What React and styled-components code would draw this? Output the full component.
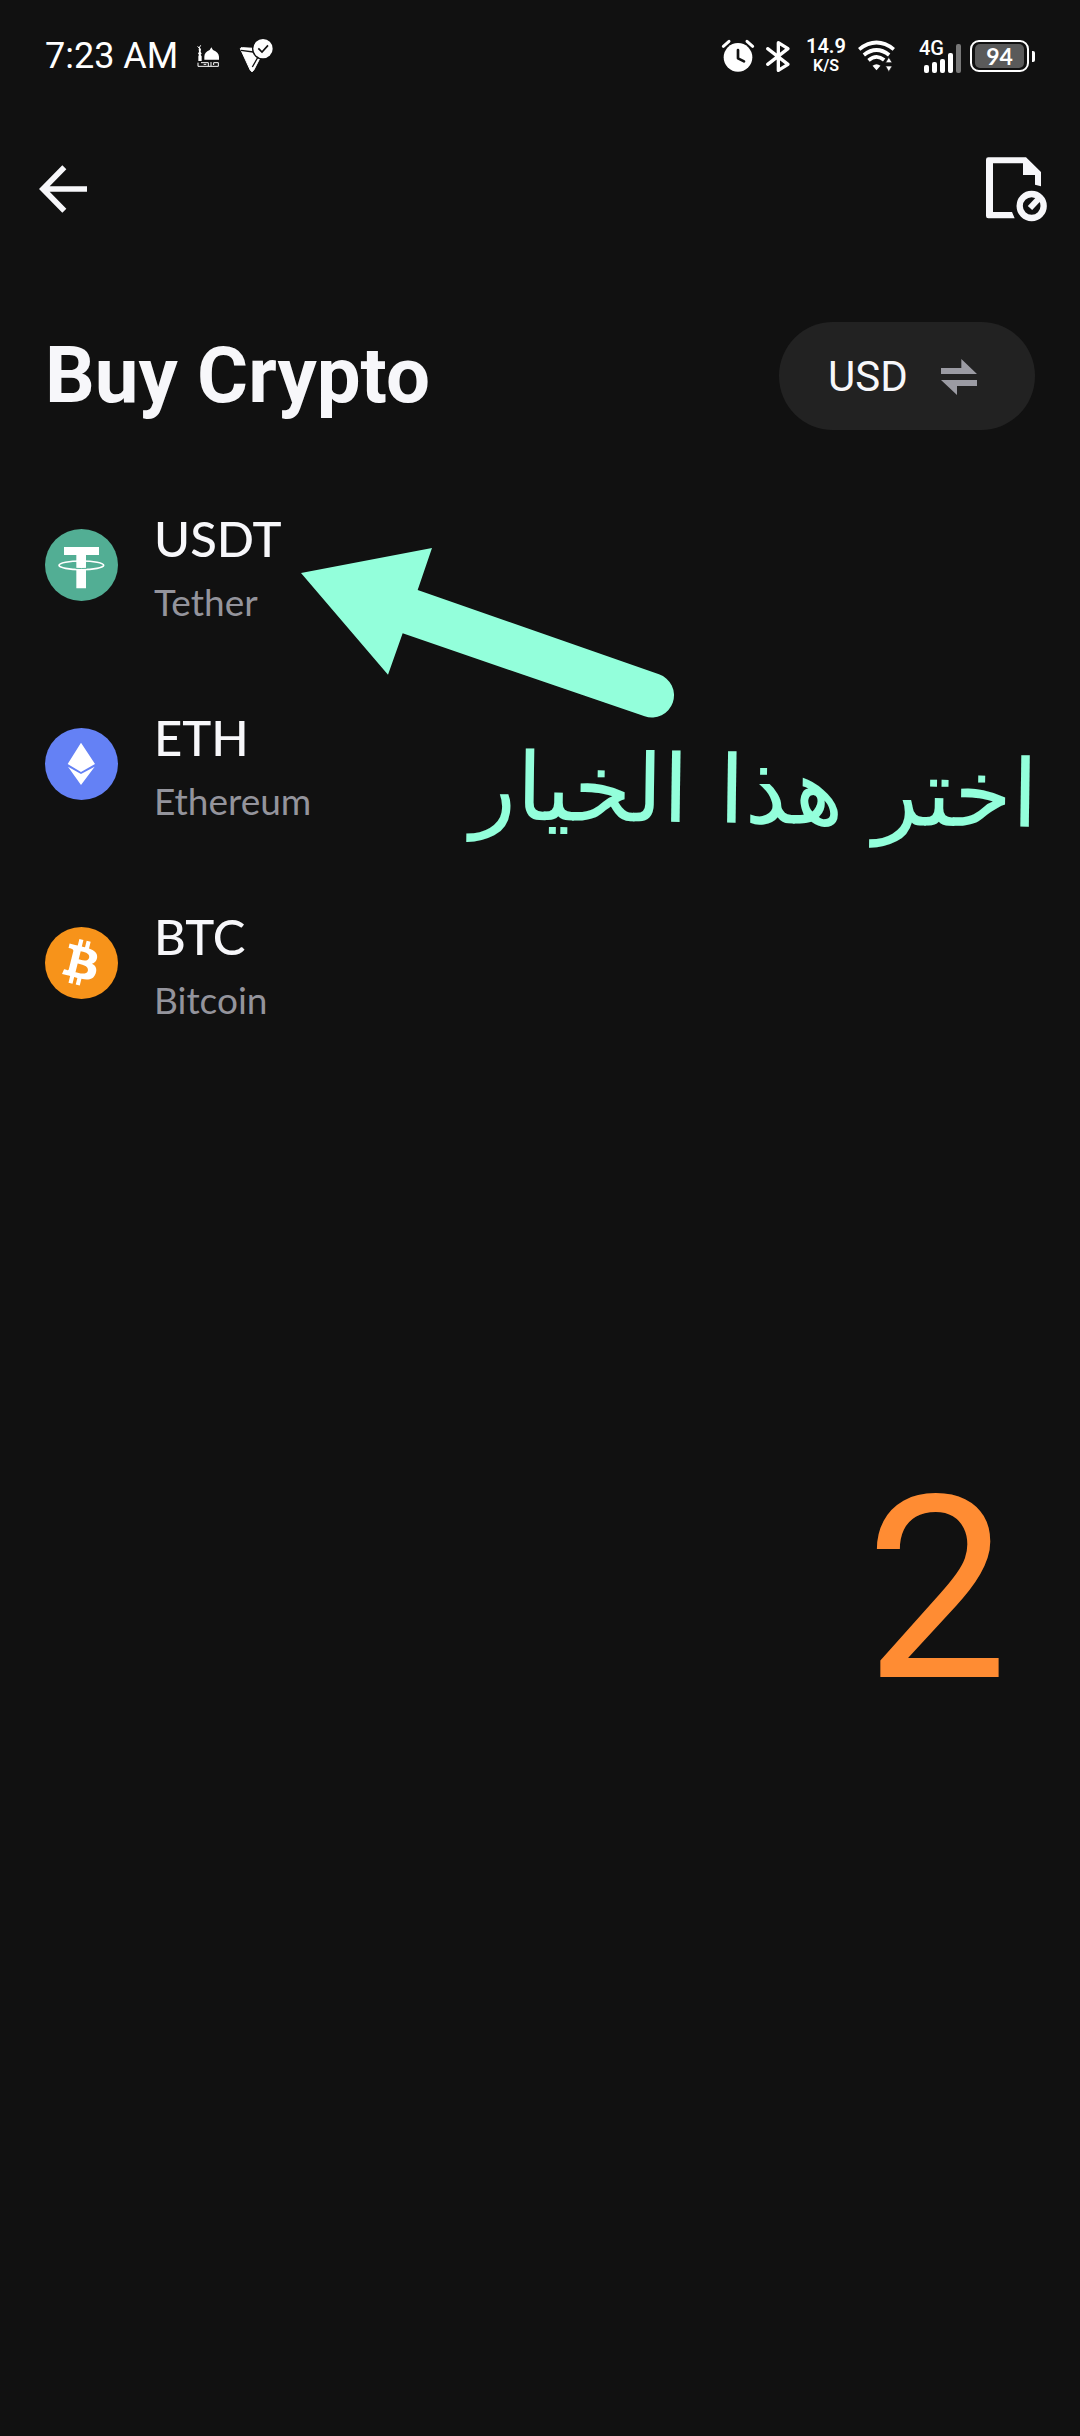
import React from "react";
import styled, { createGlobalStyle } from "styled-components";

const GlobalStyle = createGlobalStyle`
  * { box-sizing: border-box; }
  body { margin: 0; background: #111111; color: #f7f7fa; font-family: Roboto, "Liberation Sans", sans-serif; }
  svg { display: block; flex: none; overflow: visible; }
`;

const Screen = styled.main`
  position: relative;
  min-height: 100vh;
  overflow: hidden;
`;

const StatusBar = styled.div`
  display: flex;
  align-items: center;
  justify-content: space-between;
  height: 112px;
  padding: 0 45px;
  color: #ffffff;
`;

const StatusGroup = styled.div`
  display: flex;
  align-items: center;
  gap: ${(p) => p.$gap}px;
`;

const NetworkGroup = styled(StatusGroup)`
  padding-left: 12px;
`;

const Clock = styled.time`
  font-size: 36px;
  line-height: 44px;
`;

const Speed = styled.div`
  display: flex;
  flex-direction: column;
  align-items: center;
  width: 44px;
  padding-left: 4px;
  font-weight: 600;
`;

const SpeedLine = styled.span`
  font-size: ${(p) => p.$size}px;
  line-height: 19px;
`;

const Signal = styled.div`
  display: grid;
  width: 42px;
  height: 34px;
  > * { grid-area: 1 / 1; }
`;

const Network = styled.span`
  font-size: 20px;
  line-height: 18px;
  font-weight: 500;
`;

const Bars = styled.svg`
  align-self: end;
  justify-self: end;
`;

const Battery = styled.div`
  display: flex;
  align-items: center;
  gap: 3px;
`;

const Cell = styled.div`
  width: 59px;
  height: 32px;
  padding: 2px 3px;
  border: 2px solid #ffffff;
  border-radius: 9px;
`;

const Charge = styled.div`
  height: 24px;
  border-radius: 5px;
  background: #5a5a5a;
  text-align: center;
  font: 700 23px/24px Lato, sans-serif;
`;

const Nub = styled.div`
  width: 3px;
  height: 11px;
  border-radius: 0 2px 2px 0;
  background: #ffffff;
`;

const Toolbar = styled.header`
  display: flex;
  align-items: center;
  justify-content: space-between;
  height: 154px;
  padding: 0 33px 0 39px;
`;

const IconButton = styled.button`
  padding: 0;
  border: 0;
  background: none;
  color: #f7f7fa;
`;

const TitleRow = styled.section`
  display: flex;
  align-items: center;
  justify-content: space-between;
  padding: 56px 45px 35px;
`;

const Title = styled.h1`
  margin: 0;
  font-size: 78px;
  line-height: 92px;
  font-weight: 700;
`;

const Currency = styled.button`
  display: flex;
  align-items: center;
  justify-content: space-between;
  width: 256px;
  height: 108px;
  padding: 2px 58px 0 49px;
  border: 0;
  border-radius: 54px;
  background: #222222;
  color: #f7f7fa;
  font: 400 42px/50px Roboto, sans-serif;
`;

const CoinArea = styled.section`
  position: relative;
`;

const CoinList = styled.ul`
  margin: 0;
  padding: 0;
  list-style: none;
`;

const Coin = styled.button`
  display: flex;
  align-items: center;
  gap: 36px;
  width: 100%;
  height: 199px;
  padding: 0 45px;
  border: 0;
  background: none;
  color: #f7f7fa;
  text-align: left;
  font-family: Lato, "Open Sans", sans-serif;
`;

const CoinText = styled.span`
  display: flex;
  flex-direction: column;
  gap: 4px;
  padding-top: 6px;
`;

const Symbol = styled.span`
  font-size: 49px;
  line-height: 64px;
  font-weight: 500;
`;

const Name = styled.span`
  color: #94949c;
  font-size: 37px;
  line-height: 56px;
`;

const Arrow = styled.svg`
  position: absolute;
  left: 300px;
  top: 83px;
  pointer-events: none;
`;

const Hint = styled.p`
  position: absolute;
  right: 42px;
  top: 256px;
  margin: 0;
  color: #93ffdb;
  font: 400 94px/140px "DejaVu Sans", sans-serif;
  white-space: nowrap;
  transform: rotate(0.8deg);
  pointer-events: none;
`;

const Step = styled.p`
  position: absolute;
  right: 72px;
  top: 1440px;
  margin: 0;
  color: #ff8c33;
  font-size: 254px;
  line-height: 300px;
`;

const MosqueIcon = () => (
  <svg width="23" height="22" viewBox="0 0 69 66" fill="#fff" aria-hidden="true">
    <path d="M22 44V35q0-14 16-20l5-8 5 8q17 6 18 20v9zM4 48V34l2-5-3-3 3-6-1-8 3-5 4 6-1 7 3 6-3 3 3 5v14z" />
    <path d="M2 4l4 5 5-8M3 53v11h61V53H50v7M12 53h22v11M20 58h8M42 51v12" fill="none" stroke="#fff" strokeWidth="3" />
  </svg>
);

const ConeIcon = () => (
  <svg width="34" height="34" viewBox="0 0 102 102" aria-hidden="true">
    <path d="M4 29q1-4 7-3l34 2q2 22 19 27l-20 39q-5 8-10 0z" fill="#fff" stroke="#fff" strokeWidth="3" strokeLinejoin="round" />
    <path d="M6 34l37 5M40 84l17-30" stroke="#111" strokeWidth="4" fill="none" />
    <circle cx="72" cy="29" r="33" fill="#111" />
    <circle cx="72" cy="29" r="29" fill="#fff" />
    <path d="M58 28l11 11 18-20" fill="none" stroke="#111" strokeWidth="5" />
  </svg>
);

const AlarmIcon = () => (
  <svg width="32" height="32" viewBox="0 0 96 96" aria-hidden="true">
    <circle cx="48" cy="52" r="43" fill="#fff" />
    <path d="M4 19L21 4M92 19L75 4" stroke="#fff" strokeWidth="9" strokeLinecap="round" />
    <path d="M48 30v25l18 9" fill="none" stroke="#111" strokeWidth="8" strokeLinecap="round" strokeLinejoin="round" />
  </svg>
);

const BluetoothIcon = () => (
  <svg width="24" height="31" viewBox="0 0 72 93" aria-hidden="true">
    <path d="M5 23l61 47-29 18V5l29 18L5 70" fill="none" stroke="#fff" strokeWidth="10" strokeLinecap="round" strokeLinejoin="round" />
  </svg>
);

const WifiIcon = () => (
  <svg width="37" height="30" viewBox="0 0 110 90" aria-hidden="true">
    <path d="M3 25q52-41 104 0M17 42q38-30 76 0M31 58q24-20 47-1" fill="none" stroke="#fff" strokeWidth="11" />
    <path d="M43 74q12-9 24 0L55 88z" fill="#fff" />
    <path d="M92 49l10 16H82zM92 92l10-17H82z" fill="#fff" stroke="#111" strokeWidth="2" />
  </svg>
);

const BackIcon = () => (
  <svg width="48" height="48" viewBox="0 0 144 144" aria-hidden="true">
    <path d="M12 72h132M76 7L12 72l64 65" fill="none" stroke="#f7f7fa" strokeWidth="17" />
  </svg>
);

const OrdersIcon = () => (
  <svg width="61" height="65" viewBox="0 0 183 195" fill="#f7f7fa" aria-hidden="true">
    <path d="M7 1h113l45 44v43l-18-5V54h-36V19H21v146h57l8 19H7q-7 0-7-7V8q0-7 7-7z" />
    <circle cx="137" cy="147" r="36" fill="none" stroke="#f7f7fa" strokeWidth="19" />
    <path d="M132 153l31-33" stroke="#f7f7fa" strokeWidth="18" />
  </svg>
);

const SwapIcon = () => (
  <svg width="36" height="36" viewBox="0 0 108 108" fill="#9b9ba3" aria-hidden="true">
    <path d="M0 27h61V0l47 45H0zM108 81H48v27L0 63h108z" />
  </svg>
);

const TetherIcon = () => (
  <svg width="73" height="72" viewBox="0 0 219 216" aria-hidden="true">
    <ellipse cx="109.500" cy="108" rx="109.500" ry="108" fill="#52ae94" />
    <path d="M57 54h105v24h-39v100H94V78H57z" fill="#fff" />
    <ellipse cx="109" cy="109" rx="67" ry="13" fill="none" stroke="#fff" strokeWidth="5" />
    <path d="M92 118q17 1 33 0" stroke="#52ae94" strokeWidth="3" fill="none" />
  </svg>
);

const EthereumIcon = () => (
  <svg width="73" height="72" viewBox="0 0 219 216" aria-hidden="true">
    <ellipse cx="109.500" cy="108" rx="109.500" ry="108" fill="#6481f5" />
    <path d="M108 44l42 64-42 24-40-24zM69 116l39 22 41-22-41 55z" fill="#fff" />
  </svg>
);

const BitcoinIcon = () => (
  <svg width="73" height="72" viewBox="0 0 219 216" aria-hidden="true">
    <ellipse cx="109.500" cy="108" rx="109.500" ry="108" fill="#f7931a" />
    <path
      transform="translate(-6 -6) scale(7)"
      fill="#fff"
      d="M23.189 14.02c.314-2.096-1.283-3.223-3.465-3.975l.708-2.84-1.728-.43-.69 2.765c-.454-.114-.92-.22-1.385-.326l.695-2.783L15.596 6l-.708 2.839c-.376-.086-.746-.17-1.104-.26l.002-.009-2.384-.595-.46 1.846s1.283.294 1.256.312c.7.175.826.638.805 1.006l-.806 3.235c.048.012.11.03.18.057l-.183-.045-1.13 4.532c-.086.212-.303.531-.793.41.018.025-1.256-.313-1.256-.313l-.858 1.978 2.25.561c.418.105.828.215 1.231.318l-.715 2.872 1.727.43.708-2.84c.472.127.93.245 1.378.357l-.706 2.828 1.728.43.715-2.866c2.948.558 5.164.333 6.097-2.333.752-2.146-.037-3.385-1.588-4.192 1.13-.26 1.98-1.003 2.207-2.538zm-3.95 5.538c-.533 2.147-4.148.986-5.32.695l.95-3.805c1.172.293 4.929.872 4.37 3.11zm.535-5.569c-.487 1.953-3.495.96-4.47.717l.86-3.45c.975.243 4.118.696 3.61 2.733z"
    />
  </svg>
);

const coins = [
  { symbol: "USDT", name: "Tether", Icon: TetherIcon },
  { symbol: "ETH", name: "Ethereum", Icon: EthereumIcon },
  { symbol: "BTC", name: "Bitcoin", Icon: BitcoinIcon },
];

export default function App() {
  return (
    <Screen>
      <GlobalStyle />
      <StatusBar>
        <StatusGroup $gap={19}>
          <Clock>7:23 AM</Clock>
          <MosqueIcon />
          <ConeIcon />
        </StatusGroup>
        <StatusGroup $gap={12}>
          <AlarmIcon />
          <BluetoothIcon />
          <Speed>
            <SpeedLine $size={20}>14.9</SpeedLine>
            <SpeedLine $size={16}>K/S</SpeedLine>
          </Speed>
          <WifiIcon />
          <NetworkGroup $gap={9}>
            <Signal>
              <Network>4G</Network>
              <Bars width="37" height="29" viewBox="0 0 37 29" fill="#fff">
                <rect x="0" y="21" width="5" height="8" rx="2" />
                <rect x="8" y="18" width="5" height="11" rx="2" />
                <rect x="16" y="15" width="5" height="14" rx="2" />
                <rect x="24" y="9" width="5" height="20" rx="2" />
                <rect x="32" y="0" width="5" height="29" rx="2" fill="#777" />
              </Bars>
            </Signal>
            <Battery>
              <Cell>
                <Charge>94</Charge>
              </Cell>
              <Nub />
            </Battery>
          </NetworkGroup>
        </StatusGroup>
      </StatusBar>
      <Toolbar>
        <IconButton type="button" aria-label="Back">
          <BackIcon />
        </IconButton>
        <IconButton type="button" aria-label="Orders">
          <OrdersIcon />
        </IconButton>
      </Toolbar>
      <TitleRow>
        <Title>Buy Crypto</Title>
        <Currency type="button">
          USD
          <SwapIcon />
        </Currency>
      </TitleRow>
      <CoinArea>
        <CoinList>
          {coins.map(({ symbol, name, Icon }) => (
            <li key={symbol}>
              <Coin type="button">
                <Icon />
                <CoinText>
                  <Symbol>{symbol}</Symbol>
                  <Name>{name}</Name>
                </CoinText>
              </Coin>
            </li>
          ))}
        </CoinList>
        <Arrow width="375" height="171" viewBox="0 0 1125 513" aria-hidden="true">
          <path d="M3 75L396 0L353 126L1077 379A66 66 0 0 1 1034 505L308 256L264 380Z" fill="#93ffdb" />
        </Arrow>
        <Hint lang="ar" dir="rtl">اختر هذا الخيار</Hint>
      </CoinArea>
      <Step>2</Step>
    </Screen>
  );
}
